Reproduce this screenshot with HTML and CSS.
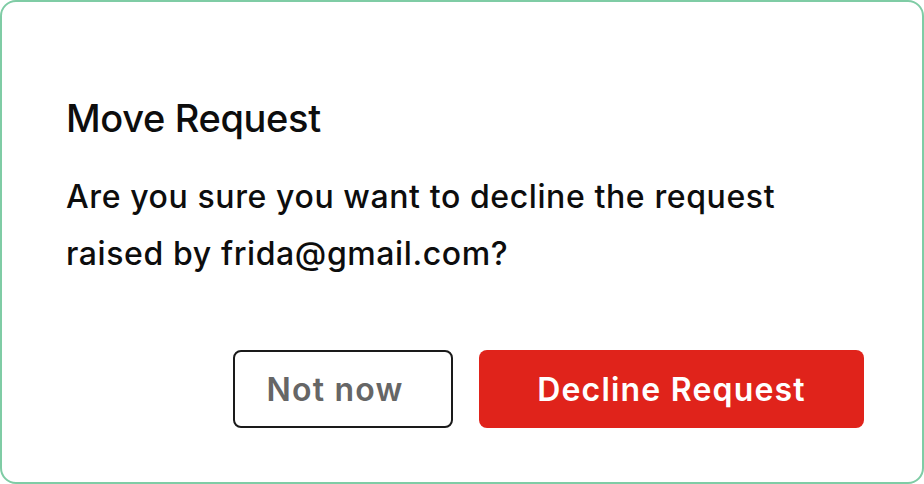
FILE: index.html
```html
<!DOCTYPE html>
<html>
<head>
<meta charset="utf-8">
<link rel="stylesheet" href="styles.css">
</head>
<body>
<div class="card">
  <h1 class="title">Move Request</h1>
  <p class="message">Are you sure you want to decline the request raised by frida@gmail.com?</p>
  <div class="actions">
    <button class="btn btn-secondary">Not now</button>
    <button class="btn btn-danger">Decline Request</button>
  </div>
</div>
</body>
</html>
```
FILE: styles.css
```css
html, body {
  margin: 0;
  padding: 0;
  background: #ffffff;
}
.card {
  box-sizing: border-box;
  width: 924px;
  height: 484px;
  border: 2px solid #7fcca5;
  border-radius: 16px;
  background: #fff;
  padding: 92px 58px 0 64px;
  font-family: Inter, "Noto Sans", sans-serif;
  color: #0d0d0d;
}
.title {
  margin: 0;
  font-size: 38px;
  font-weight: 500;
  line-height: 48px;
  letter-spacing: -0.35px;
}
.message {
  margin: 26px 0 0 0;
  font-size: 32px;
  font-weight: 500;
  line-height: 57px;
  width: 780px;
  letter-spacing: 0.6px;
}
.actions {
  display: flex;
  justify-content: flex-end;
  gap: 26px;
  margin-top: 68px;
}
.btn {
  box-sizing: border-box;
  display: flex;
  align-items: center;
  justify-content: center;
  height: 78px;
  padding: 0;
  border-radius: 8px;
  font-family: Inter, "Noto Sans", sans-serif;
  font-size: 32px;
  font-weight: 600;
  letter-spacing: 1.2px;
  cursor: pointer;
}
.btn-secondary {
  width: 220px;
  padding-right: 16px;
  background: #fff;
  border: 2px solid #1a1a1a;
  color: #666666;
}
.btn-danger {
  width: 385px;
  background: #e0231b;
  border: none;
  color: #fff;
}
```
